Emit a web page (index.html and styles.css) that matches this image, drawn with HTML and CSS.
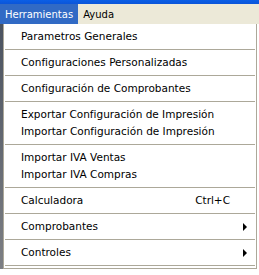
FILE: index.html
```html
<!DOCTYPE html>
<html lang="es">
<head>
  <meta charset="UTF-8">
  <title>Herramientas</title>
  <link rel="stylesheet" href="styles.css">
</head>
<body>
  <div class="titlebar"></div>
  <div class="menubar">
    <span class="top-item active">Herramientas</span>
    <span class="top-item">Ayuda</span>
  </div>

  <div class="area">
    <div class="side"></div>
    <div class="menu">
      <div class="item">Parametros Generales</div>
      <div class="sep"></div>
      <div class="item">Configuraciones Personalizadas</div>
      <div class="sep"></div>
      <div class="item">Configuración de Comprobantes</div>
      <div class="sep"></div>
      <div class="item">Exportar Configuración de Impresión</div>
      <div class="item">Importar Configuración de Impresión</div>
      <div class="sep"></div>
      <div class="item">Importar IVA Ventas</div>
      <div class="item">Importar IVA Compras</div>
      <div class="sep"></div>
      <div class="item">Calculadora <span class="shortcut">Ctrl+C</span></div>
      <div class="sep"></div>
      <div class="item">Comprobantes <span class="arrow"></span></div>
      <div class="sep"></div>
      <div class="item">Controles <span class="arrow"></span></div>
      <div class="sep last"></div>
    </div>
  </div>
</body>
</html>
```

FILE: styles.css
```css
body {
  margin: 0;
  font-family: 'DejaVu Sans', sans-serif;
  font-size: 10.5px;
  background: #fff;
  color: #000;
  width: 259px;
  height: 275px;
  overflow: hidden;
}
.titlebar {
  height: 4px;
  background: linear-gradient(#0a5fe6, #0b55d8);
}
.menubar {
  height: 20px;
  background: #ece9d8;
  display: flex;
  align-items: stretch;
  font-size: 10px;
}
.top-item {
  display: flex;
  align-items: center;
  padding: 0 5px;
}
.top-item.active {
  background: #316ac5;
  color: #fff;
}
.area {
  display: flex;
}
.side {
  width: 3px;
  background: linear-gradient(#4b5360, #7d7f84);
}
.menu {
  width: 252px;
  border: 1px solid #aca899;
  border-top: none;
  padding: 4px 0 0;
  background: #fff;
}
.item {
  height: 17px;
  line-height: 17px;
  padding: 0 9px 0 17px;
  display: flex;
  justify-content: space-between;
  align-items: center;
  white-space: nowrap;
}
.sep {
  height: 1px;
  background: #aca899;
  margin: 4px 1px 4px;
}
.sep.last {
  margin-bottom: 2px;
}
.shortcut {
  padding-right: 17px;
}
.arrow {
  width: 0;
  height: 0;
  border-top: 4px solid transparent;
  border-bottom: 4px solid transparent;
  border-left: 4px solid #000;
}
```
